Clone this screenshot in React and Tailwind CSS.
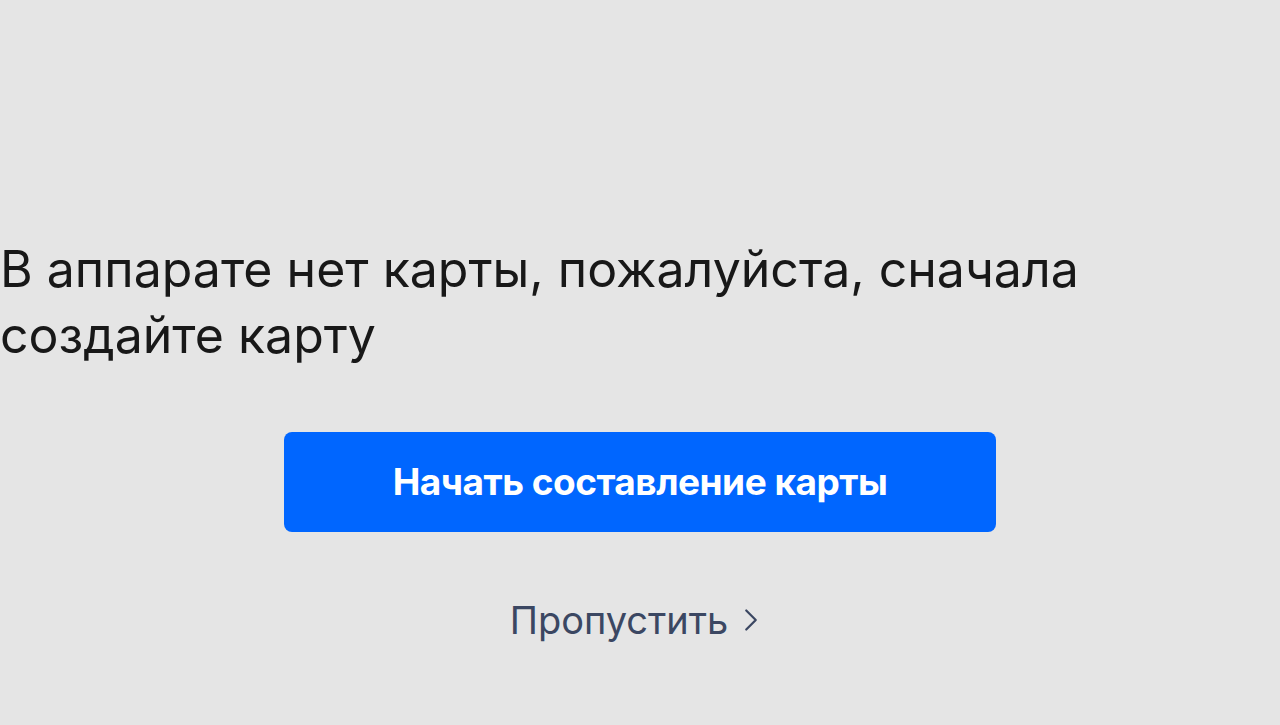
import React from "react";
import { ChevronRight } from "lucide-react";

const App = () => {
  return (
    <div
      className="min-h-screen w-full bg-[#e5e5e5] flex flex-col pt-[236px]"
      style={{ fontFamily: "Inter, 'Noto Sans', sans-serif" }}
    >
      <h1 className="text-[50px] leading-[66px] font-normal text-[#181818] max-w-[1110px]">
        В аппарате нет карты, пожалуйста, сначала создайте карту
      </h1>

      <div className="flex justify-center mt-[64px]">
        <button className="w-[712px] h-[100px] rounded-lg bg-[#0066ff] text-white text-[37px] font-bold tracking-[-0.5px] flex items-center justify-center">
          Начать составление карты
        </button>
      </div>

      <div className="flex justify-center mt-[69px]">
        <button className="flex items-center gap-[4px] text-[38px] text-[#3b4762] leading-none">
          Пропустить
          <ChevronRight className="w-[38px] h-[38px]" strokeWidth={1.4} />
        </button>
      </div>
    </div>
  );
};

export default App;
